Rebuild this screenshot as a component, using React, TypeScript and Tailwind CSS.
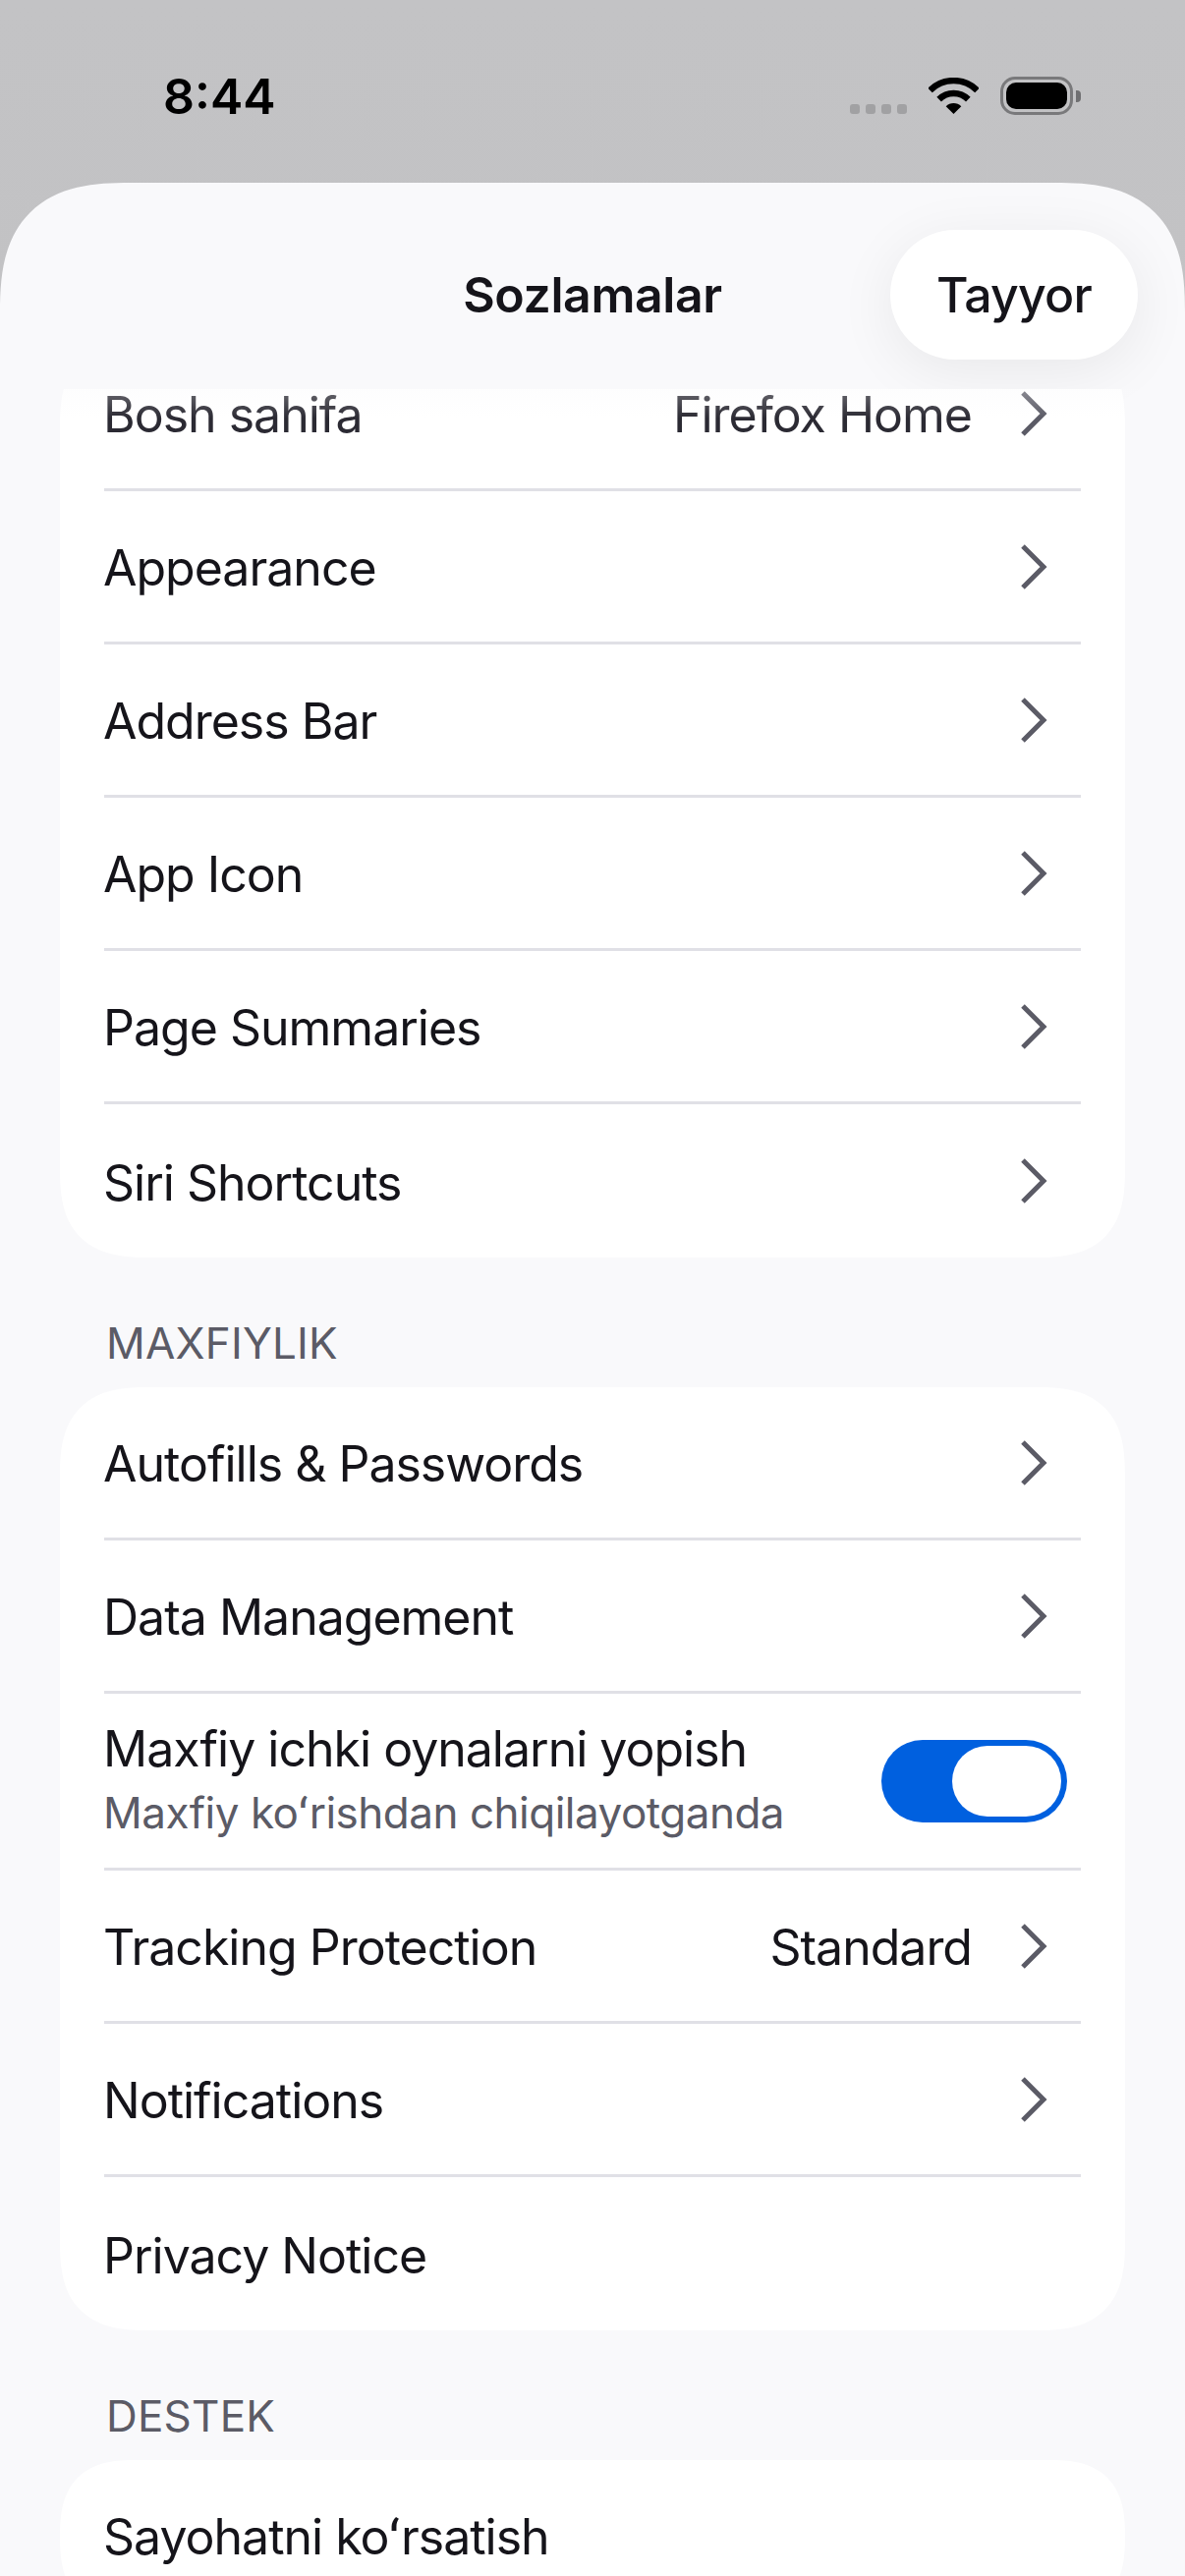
import React from "react";

function Chevron() {
  return (
    <svg className="w-[30px] h-[48px] shrink-0" viewBox="0 0 30 48" fill="none">
      <path d="M4 3 L25 24 L4 45" stroke="#5b5b66" strokeWidth="5" />
    </svg>
  );
}

function Row({
  title,
  value,
  chevron = true,
  last = false,
  dim = false,
}: {
  title: string;
  value?: string;
  chevron?: boolean;
  last?: boolean;
  dim?: boolean;
}) {
  return (
    <div className={`h-[156px] flex items-center pr-[33px] mx-[45px] ${last ? "" : "border-b-[3px] border-[#e0e0e6]"} ${dim ? "text-[#2b2a33]" : "text-[#15141a]"}`}>
      <div className="flex-1 pt-[3px] -ml-[1px]">{title}</div>
      {value ? <div className="mr-[48px] pt-[3px]">{value}</div> : null}
      {chevron ? <Chevron /> : null}
    </div>
  );
}

function Card({ children, className = "" }: { children: React.ReactNode; className?: string }) {
  return <div className={`mx-[61px] bg-white rounded-[90px] [corner-shape:superellipse(1.4)] overflow-hidden ${className}`}>{children}</div>;
}

function Label({ children }: { children: React.ReactNode }) {
  return <div className="h-[132px] pl-[108px] pt-[60px] text-[44px] leading-[54px] tracking-[0.2px] text-[#5b5b66]">{children}</div>;
}

export default function App() {
  return (
    <div
      className="w-[1206px] h-[2622px] overflow-hidden flex flex-col bg-gradient-to-b from-[#c3c3c5] to-[#bbbbbd] text-[50px] leading-[54px] tracking-[-1px]"
      style={{ fontFamily: "Inter, 'Noto Sans', sans-serif" }}
    >
      <div className="h-[186px] shrink-0 flex justify-between pl-[166px] pr-[106px] pt-[78px]">
        <div className="text-[50px] leading-[40px] font-semibold text-black tracking-[0px]">8:44</div>
        <div className="flex items-start">
          <div className="flex gap-[6px] mt-[28px] mr-[22px]">
            <div className="w-[10px] h-[10px] rounded-[3px] bg-[#a1a1a3]" />
            <div className="w-[10px] h-[10px] rounded-[3px] bg-[#a1a1a3]" />
            <div className="w-[10px] h-[10px] rounded-[3px] bg-[#a1a1a3]" />
            <div className="w-[10px] h-[10px] rounded-[3px] bg-[#a1a1a3]" />
          </div>
          <svg className="w-[51px] h-[37px] mt-[1px] mr-[22px]" viewBox="0 0 51 37" fill="none">
            <path d="M1.5 13 A34 34 0 0 1 49.5 13" stroke="#000" strokeWidth="6.5" />
            <path d="M10.65 22.15 A21 21 0 0 1 40.35 22.15" stroke="#000" strokeWidth="6.5" />
            <path d="M25.5 37 L17.7 29.2 A11 11 0 0 1 33.3 29.2 Z" fill="#000" />
          </svg>
          <div className="flex items-center">
            <div className="w-[74px] h-[39px] rounded-[15px] border-[3px] border-[#79797b] p-[3px]">
              <div className="w-full h-full rounded-[10px] bg-black" />
            </div>
            <div className="w-[5px] h-[12px] ml-[3px] rounded-r-[4px] bg-[#6f6f71]" />
          </div>
        </div>
      </div>

      <div className="flex-1 min-h-0 flex flex-col bg-[#f9f9fb] rounded-t-[132px] [corner-shape:superellipse(1.4)] overflow-hidden">
        <div className="relative h-[210px] shrink-0 flex items-center justify-center">
          <div className="font-semibold text-[#15141a] pt-[18px] tracking-[-0.4px]">Sozlamalar</div>
          <div className="absolute left-[906px] top-[48px] w-[252px] h-[132px] rounded-full bg-white flex items-center justify-center text-[#15141a] font-medium tracking-[-0.8px] shadow-[0_12px_60px_rgba(0,0,0,0.07)]">
            Tayyor
          </div>
        </div>

        <div className="relative flex-1 min-h-0 overflow-hidden">
          <div className="absolute inset-x-0 top-0 h-[30px] bg-gradient-to-b from-[#f9f9fb]/30 to-transparent" />
          <Card className="-mt-[52px]">
            <Row title="Bosh sahifa" value="Firefox Home" dim />
            <Row title="Appearance" />
            <Row title="Address Bar" />
            <Row title="App Icon" />
            <Row title="Page Summaries" />
            <Row title="Siri Shortcuts" last />
          </Card>
          <Label>MAXFIYLIK</Label>
          <Card>
            <Row title="Autofills & Passwords" />
            <Row title="Data Management" />
            <div className="h-[180px] flex items-center mx-[45px] pr-[14px] border-b-[3px] border-[#e0e0e6]">
              <div className="flex-1 -ml-[1px]">
                <div className="text-[#15141a]">Maxfiy ichki oynalarni yopish</div>
                <div className="text-[44px] leading-[54px] tracking-[-0.5px] text-[#5b5b66] mt-[11px]">Maxfiy koʻrishdan chiqilayotganda</div>
              </div>
              <div className="w-[189px] h-[84px] rounded-full bg-[#0060df] flex justify-end items-center pr-[6px]">
                <div className="w-[111px] h-[72px] rounded-full bg-white" />
              </div>
            </div>
            <Row title="Tracking Protection" value="Standard" />
            <Row title="Notifications" />
            <Row title="Privacy Notice" chevron={false} last />
          </Card>
          <Label>DESTEK</Label>
          <Card>
            <Row title="Sayohatni koʻrsatish" chevron={false} />
          </Card>
        </div>
      </div>
    </div>
  );
}
